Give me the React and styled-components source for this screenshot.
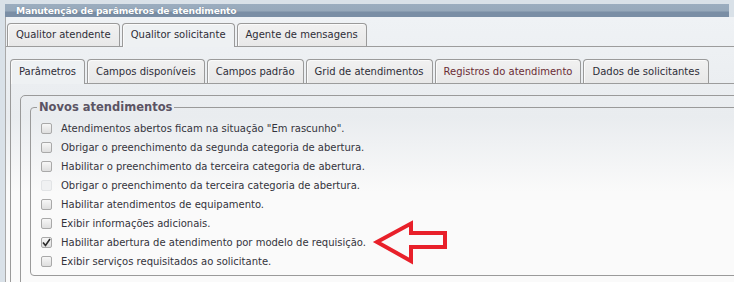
import React from "react";
import styled, { createGlobalStyle } from "styled-components";

const GlobalStyle = createGlobalStyle`
  html, body { margin: 0; padding: 0; background: #d9e1e8; overflow: hidden; }
  body { font-family: "DejaVu Sans", Verdana, sans-serif; font-size: 10px; color: #333; }
  * { box-sizing: border-box; }
`;

const Page = styled.div`
  position: relative;
  width: 734px;
  height: 282px;
  padding: 4px 0 0 5px;
  overflow: hidden;
`;

const Window = styled.div`
  width: 780px;
`;

const TitleBar = styled.div`
  width: 724px;
  height: 13px;
  padding-left: 11px;
  background: linear-gradient(#9badbf 0, #97a9bb 7px, #7a8ea5 8px, #7a8ea5 13px);
  color: #fff;
  font-weight: bold;
  font-size: 9.2px;
  letter-spacing: -0.2px;
  line-height: 13px;
  text-shadow: 0 0 1px rgba(60, 80, 100, 0.6);
  white-space: nowrap;
`;

const Body = styled.div`
  height: 270px;
  border-left: 1px solid #a9a9a9;
  padding-top: 6px;
  background: linear-gradient(180deg, #eff2f5 0px, #e9ecef 100px, #fafafa 175px);
`;

const TabRow = styled.div`
  display: flex;
  gap: 2px;
  padding-left: ${(p) => p.$indent}px;
  border-bottom: 1px solid #9c9c9c;
`;

const Tab = styled.div`
  position: relative;
  height: ${(p) => (p.$active ? p.$h + 1 : p.$h)}px;
  margin-bottom: ${(p) => (p.$active ? -1 : 0)}px;
  padding: 0 8px;
  border: 1px solid #9a9a9a;
  border-bottom: none;
  border-radius: 4px 4px 0 0;
  box-shadow: inset 1px 1px 0 #fafafa;
  background: ${(p) => (p.$active ? "#eef1f3" : "linear-gradient(#f1f1f1, #e8e8e8)")};
  color: ${(p) => p.$color || "#2e2e38"};
  line-height: ${(p) => p.$h - 1}px;
  white-space: nowrap;
`;

const OuterContent = styled.div`
  padding: 12px 0 0 4px;
`;

const InnerPanel = styled.div`
  border-left: 1px solid #9a9a9a;
  padding: 11px 0 0 9px;
  height: 200px;
`;

const RoundBox = styled.div`
  border: 1px solid #9a9a9a;
  border-radius: 5px;
  padding: 4px 0 0 9px;
  height: 200px;
`;

const Fieldset = styled.fieldset`
  margin: 0;
  border: 1px solid #9a9a9a;
  border-radius: 4px;
  padding: 5px 0 4px 6px;
  min-width: 0;
`;

const Legend = styled.legend`
  padding: 0 2px;
  font-weight: bold;
  font-size: 11.5px;
  line-height: 14px;
  color: #5b5464;
`;

const Row = styled.label`
  display: flex;
  align-items: center;
  gap: 9px;
  height: 19px;
  padding-left: 4px;
  color: #34343c;
  white-space: nowrap;
`;

const Box = styled.span`
  flex: none;
  width: 11px;
  height: 11px;
  border: 1px solid ${(p) => (p.$disabled ? "#e2e4e6" : "#a9a9a9")};
  border-radius: 2px;
  background: ${(p) =>
    p.$disabled ? "#f0f1f2" : "linear-gradient(#f7f7f7, #dedede)"};
  display: flex;
  align-items: center;
  justify-content: center;
`;

const Arrow = styled.svg`
  position: absolute;
  left: 370px;
  top: 218px;
`;

const Checkbox = ({ checked, disabled }) => (
  <Box $disabled={disabled}>
    {checked && (
      <svg width="9" height="9" viewBox="0 0 9 9">
        <path d="M1 4.5 L3.5 7.5 L8 1" fill="none" stroke="#2a2a2a" strokeWidth="1.6" />
      </svg>
    )}
  </Box>
);

const outerTabs = ["Qualitor atendente", "Qualitor solicitante", "Agente de mensagens"];
const innerTabs = [
  "Parâmetros",
  "Campos disponíveis",
  "Campos padrão",
  "Grid de atendimentos",
  "Registros do atendimento",
  "Dados de solicitantes",
];

const options = [
  { label: 'Atendimentos abertos ficam na situação "Em rascunho".' },
  { label: "Obrigar o preenchimento da segunda categoria de abertura." },
  { label: "Habilitar o preenchimento da terceira categoria de abertura." },
  { label: "Obrigar o preenchimento da terceira categoria de abertura.", disabled: true },
  { label: "Habilitar atendimentos de equipamento." },
  { label: "Exibir informações adicionais." },
  { label: "Habilitar abertura de atendimento por modelo de requisição.", checked: true },
  { label: "Exibir serviços requisitados ao solicitante." },
];

export default function App() {
  return (
    <>
      <GlobalStyle />
      <Page>
        <Window>
          <TitleBar>Manutenção de parâmetros de atendimento</TitleBar>
          <Body>
            <TabRow $indent={1}>
              {outerTabs.map((t, i) => (
                <Tab key={t} $h={23} $active={i === 1}>
                  {t}
                </Tab>
              ))}
            </TabRow>
            <OuterContent>
              <TabRow $indent={0}>
                {innerTabs.map((t, i) => (
                  <Tab
                    key={t}
                    $h={24}
                    $active={i === 0}
                    $color={t === "Registros do atendimento" ? "#6a2c34" : undefined}
                  >
                    {t}
                  </Tab>
                ))}
              </TabRow>
              <InnerPanel>
                <RoundBox>
                  <Fieldset>
                    <Legend>Novos atendimentos</Legend>
                    {options.map((o) => (
                      <Row key={o.label}>
                        <Checkbox checked={o.checked} disabled={o.disabled} />
                        {o.label}
                      </Row>
                    ))}
                  </Fieldset>
                </RoundBox>
              </InnerPanel>
            </OuterContent>
          </Body>
        </Window>
        <Arrow width="84" height="50" viewBox="0 0 84 50">
          <polygon
            points="7,24 41,5.5 41,15 75,15 75,29 41,29 41,43"
            fill="none"
            stroke="#e8202a"
            strokeWidth="4"
            strokeLinejoin="miter"
          />
        </Arrow>
      </Page>
    </>
  );
}
